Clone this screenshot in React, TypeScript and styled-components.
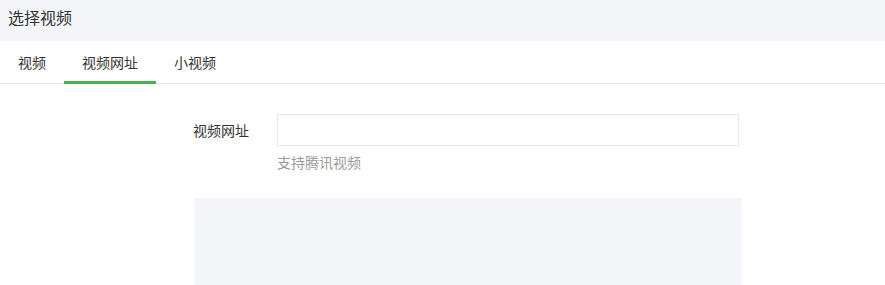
import styled, { createGlobalStyle } from 'styled-components';

const GlobalStyle = createGlobalStyle`
  body {
    margin: 0;
    background: #fff;
    font-family: "Noto Sans CJK SC", "Noto Sans", sans-serif;
    color: #333;
  }
`;

const tabs = ['视频', '视频网址', '小视频'];

function App() {
  return (
    <>
      <GlobalStyle />
      <Header>选择视频</Header>
      <TabBar>
        {tabs.map((t, i) => (
          <Tab key={t} $active={i === 1}>
            {t}
          </Tab>
        ))}
      </TabBar>
      <Content>
        <FormRow>
          <Label>视频网址</Label>
          <Field>
            <Input type="text" />
            <Hint>支持腾讯视频</Hint>
          </Field>
        </FormRow>
        <Preview />
      </Content>
    </>
  );
}

export default App;

const Header = styled.div`
  height: 41px;
  box-sizing: border-box;
  padding: 5px 8px;
  line-height: 24px;
  font-size: 16px;
  background-color: #f4f5f9;
  color: #333;
`;

const TabBar = styled.ul`
  display: flex;
  height: 43px;
  margin: 0;
  padding: 0;
  list-style: none;
  box-sizing: border-box;
  border-bottom: 1px solid #e4e6e9;
`;

const Tab = styled.li<{ $active: boolean }>`
  position: relative;
  padding: 0 18px;
  line-height: 42px;
  font-size: 14px;
  color: #333;
  cursor: pointer;

  &::after {
    content: '';
    display: ${(p) => (p.$active ? 'block' : 'none')};
    position: absolute;
    left: 0;
    right: 0;
    bottom: -1px;
    height: 3px;
    background-color: #44b549;
  }
`;

const Content = styled.div`
  padding: 30px 0 0 193px;
`;

const FormRow = styled.div`
  display: flex;
  align-items: flex-start;
`;

const Label = styled.label`
  width: 84px;
  line-height: 32px;
  font-size: 14px;
  color: #333;
`;

const Field = styled.div`
  display: flex;
  flex-direction: column;
`;

const Input = styled.input`
  width: 462px;
  height: 32px;
  box-sizing: border-box;
  margin: 0;
  padding: 0 10px;
  border: 1px solid #e4e8eb;
  outline: none;
  font-size: 14px;
`;

const Hint = styled.div`
  margin-top: 6px;
  line-height: 20px;
  font-size: 14px;
  color: #9a9a9a;
`;

const Preview = styled.div`
  width: 548px;
  height: 88px;
  margin: 26px 0 0 1px;
  background-color: #f4f5f9;
`;
